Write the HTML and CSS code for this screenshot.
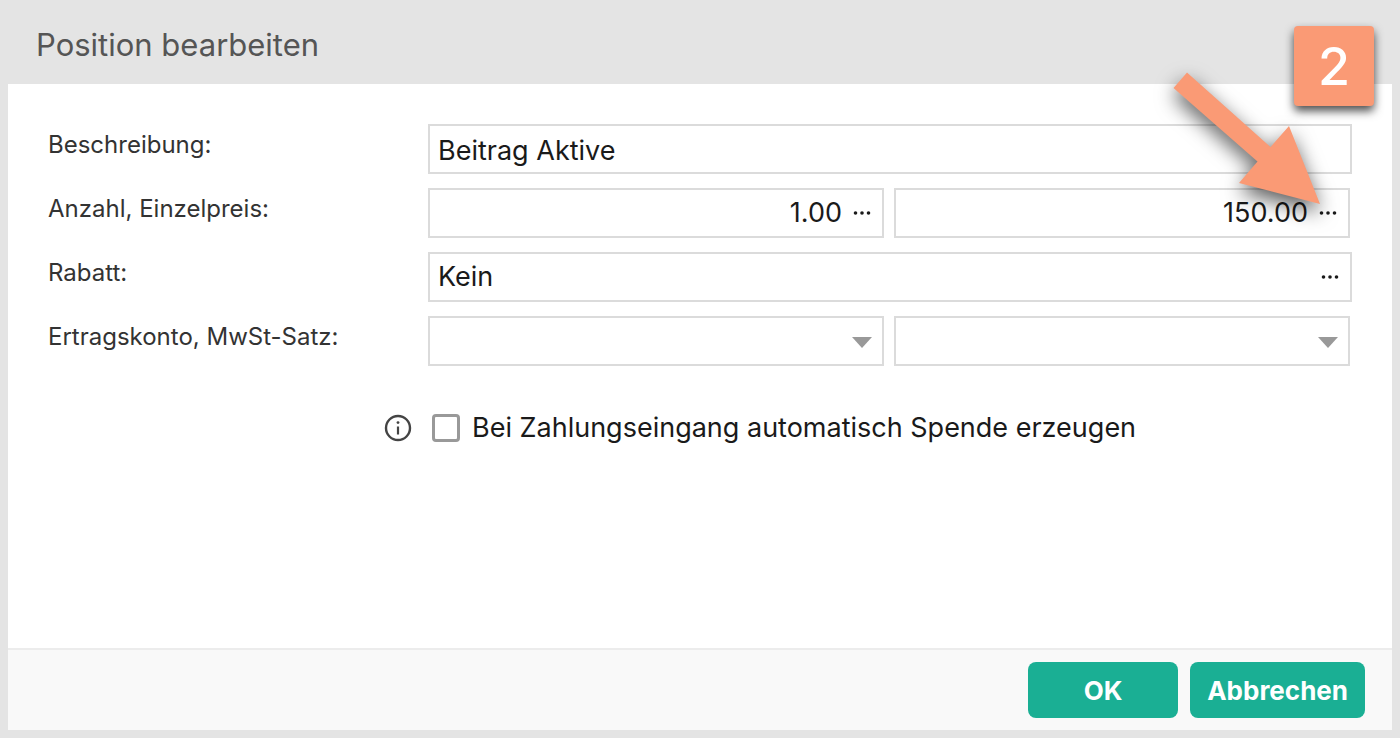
FILE: index.html
```html
<!DOCTYPE html>
<html lang="de">
<head>
    <meta charset="UTF-8">
    <meta name="viewport" content="width=device-width, initial-scale=1.0">
    <title>Position bearbeiten</title>
    <link rel="stylesheet" href="styles.css">
</head>
<body>
    <form class="dialog">
        <h1 class="dialog-title">Position bearbeiten</h1>

        <div class="dialog-body">
            <div class="row">
                <label for="description">Beschreibung:</label>
                <div class="field">
                    <input type="text" id="description" value="Beitrag Aktive">
                </div>
            </div>
            <div class="row">
                <label for="quantity">Anzahl, Einzelpreis:</label>
                <div class="pair">
                    <div class="field with-more">
                        <input type="text" class="number" id="quantity" value="1.00">
                        <button type="button" class="more" aria-label="Anzahl bearbeiten">
                            <svg width="20" height="8" viewBox="0 0 20 8"><circle cx="3.5" cy="4" r="1.8"/><circle cx="10" cy="4" r="1.8"/><circle cx="16.5" cy="4" r="1.8"/></svg>
                        </button>
                    </div>
                    <div class="field with-more">
                        <input type="text" class="number" id="price" value="150.00" aria-label="Einzelpreis">
                        <button type="button" class="more" aria-label="Einzelpreis bearbeiten">
                            <svg width="20" height="8" viewBox="0 0 20 8"><circle cx="3.5" cy="4" r="1.8"/><circle cx="10" cy="4" r="1.8"/><circle cx="16.5" cy="4" r="1.8"/></svg>
                        </button>
                    </div>
                </div>
            </div>
            <div class="row">
                <label for="discount">Rabatt:</label>
                <div class="field with-more">
                    <input type="text" id="discount" value="Kein">
                    <button type="button" class="more" aria-label="Rabatt bearbeiten">
                        <svg width="20" height="8" viewBox="0 0 20 8"><circle cx="3.5" cy="4" r="1.8"/><circle cx="10" cy="4" r="1.8"/><circle cx="16.5" cy="4" r="1.8"/></svg>
                    </button>
                </div>
            </div>
            <div class="row">
                <label for="account">Ertragskonto, MwSt-Satz:</label>
                <div class="pair">
                    <div class="field">
                        <select id="account"><option></option></select>
                        <svg class="caret" width="20" height="12" viewBox="0 0 20 12"><path d="M0 1h20L10 12z"/></svg>
                    </div>
                    <div class="field">
                        <select id="tax" aria-label="MwSt-Satz"><option></option></select>
                        <svg class="caret" width="20" height="12" viewBox="0 0 20 12"><path d="M0 1h20L10 12z"/></svg>
                    </div>
                </div>
            </div>
            <div class="donation">
                <svg class="info" width="28" height="28" viewBox="0 0 28 28">
                    <circle cx="14" cy="14" r="12" fill="none" stroke="#444" stroke-width="2.4"/>
                    <circle cx="14" cy="8.6" r="1.4" fill="#444"/>
                    <path d="M14 12.5v8" stroke="#444" stroke-width="2.2"/>
                </svg>
                <input type="checkbox" id="donation">
                <label for="donation">Bei Zahlungseingang automatisch Spende erzeugen</label>
            </div>
        </div>

        <div class="dialog-footer">
            <button type="submit" class="btn">OK</button>
            <button type="button" class="btn">Abbrechen</button>
        </div>

        <svg class="arrow" width="150" height="136" viewBox="0 0 150 136">
            <path d="M17 2.5L100.500 77L119 56L150 134L69 113L87.500 91.500L3.500 18z"/>
        </svg>
        <div class="step">2</div>
    </form>
</body>
</html>
```

FILE: styles.css
```css
* {
    box-sizing: border-box;
}

body {
    margin: 0;
    font-family: Inter, "Liberation Sans", sans-serif;
    background-color: #e4e4e4;
}

.dialog {
    position: relative;
    display: flex;
    flex-direction: column;
    min-height: 100vh;
    padding: 0 8px 8px;
}

.dialog-title {
    margin: 0;
    padding: 6px 28px 0;
    font-size: 31px;
    font-weight: 400;
    line-height: 78px;
    color: #555;
}

.dialog-body {
    flex: 1;
    display: flex;
    flex-direction: column;
    gap: 14px;
    padding: 40px;
    background-color: #fff;
}

.row {
    display: grid;
    grid-template-columns: 380px minmax(0, 1fr);
}

.row label {
    font-size: 24px;
    line-height: 42px;
    color: #333;
}

.pair {
    display: grid;
    grid-template-columns: repeat(2, minmax(0, 1fr));
    gap: 10px;
    padding-right: 2px;
}

.field {
    position: relative;
    display: flex;
    align-items: center;
    height: 50px;
    border: 2px solid #dbdbdb;
    background-color: #fff;
}

.field input,
.field select {
    flex: 1;
    min-width: 0;
    height: 100%;
    padding: 2px 8px 0;
    border: none;
    outline: none;
    background: none;
    font-family: inherit;
    font-size: 27px;
    color: #1a1a1a;
    appearance: none;
}

.field.with-more input {
    padding-top: 0;
    padding-bottom: 2px;
}

.field .number {
    text-align: right;
}

.more {
    display: flex;
    padding: 8px 10px 8px 2px;
    border: none;
    background: none;
    fill: #1a1a1a;
    cursor: pointer;
}

.caret {
    position: absolute;
    right: 10px;
    top: 18px;
    fill: #999;
    pointer-events: none;
}

.donation {
    display: flex;
    align-items: center;
    margin-top: 28px;
    padding-left: 336px;
    font-size: 27px;
    line-height: 40px;
    color: #1a1a1a;
}

.donation input {
    width: 28px;
    height: 28px;
    margin: 0 12px 0 20px;
    border: 3px solid #999;
    border-radius: 4px;
    background-color: #fff;
    appearance: none;
}

.donation input:checked {
    background-color: #1aaf94;
}

.dialog-footer {
    display: flex;
    justify-content: flex-end;
    gap: 12px;
    padding: 12px 27px 12px 12px;
    border-top: 2px solid #ececec;
    background-color: #f9f9f9;
}

.btn {
    min-width: 150px;
    height: 56px;
    padding: 0 17px;
    border: none;
    border-radius: 8px;
    background-color: #1aaf94;
    font-family: inherit;
    font-size: 26px;
    font-weight: 700;
    color: #fff;
    cursor: pointer;
}

.btn:hover {
    background-color: #17997f;
}

/* callout on top of the dialog */
.arrow {
    position: absolute;
    top: 70px;
    right: 80px;
    overflow: visible;
    fill: #fa9a75;
    filter: drop-shadow(0 8px 10px rgba(0, 0, 0, 0.65));
    pointer-events: none;
}

.step {
    position: absolute;
    top: 26px;
    right: 26px;
    width: 80px;
    height: 80px;
    border-radius: 4px;
    background-color: #fa9a75;
    box-shadow: 0 5px 10px rgba(0, 0, 0, 0.7);
    font-size: 52px;
    font-weight: 500;
    line-height: 82px;
    text-align: center;
    color: #fff;
}
```
